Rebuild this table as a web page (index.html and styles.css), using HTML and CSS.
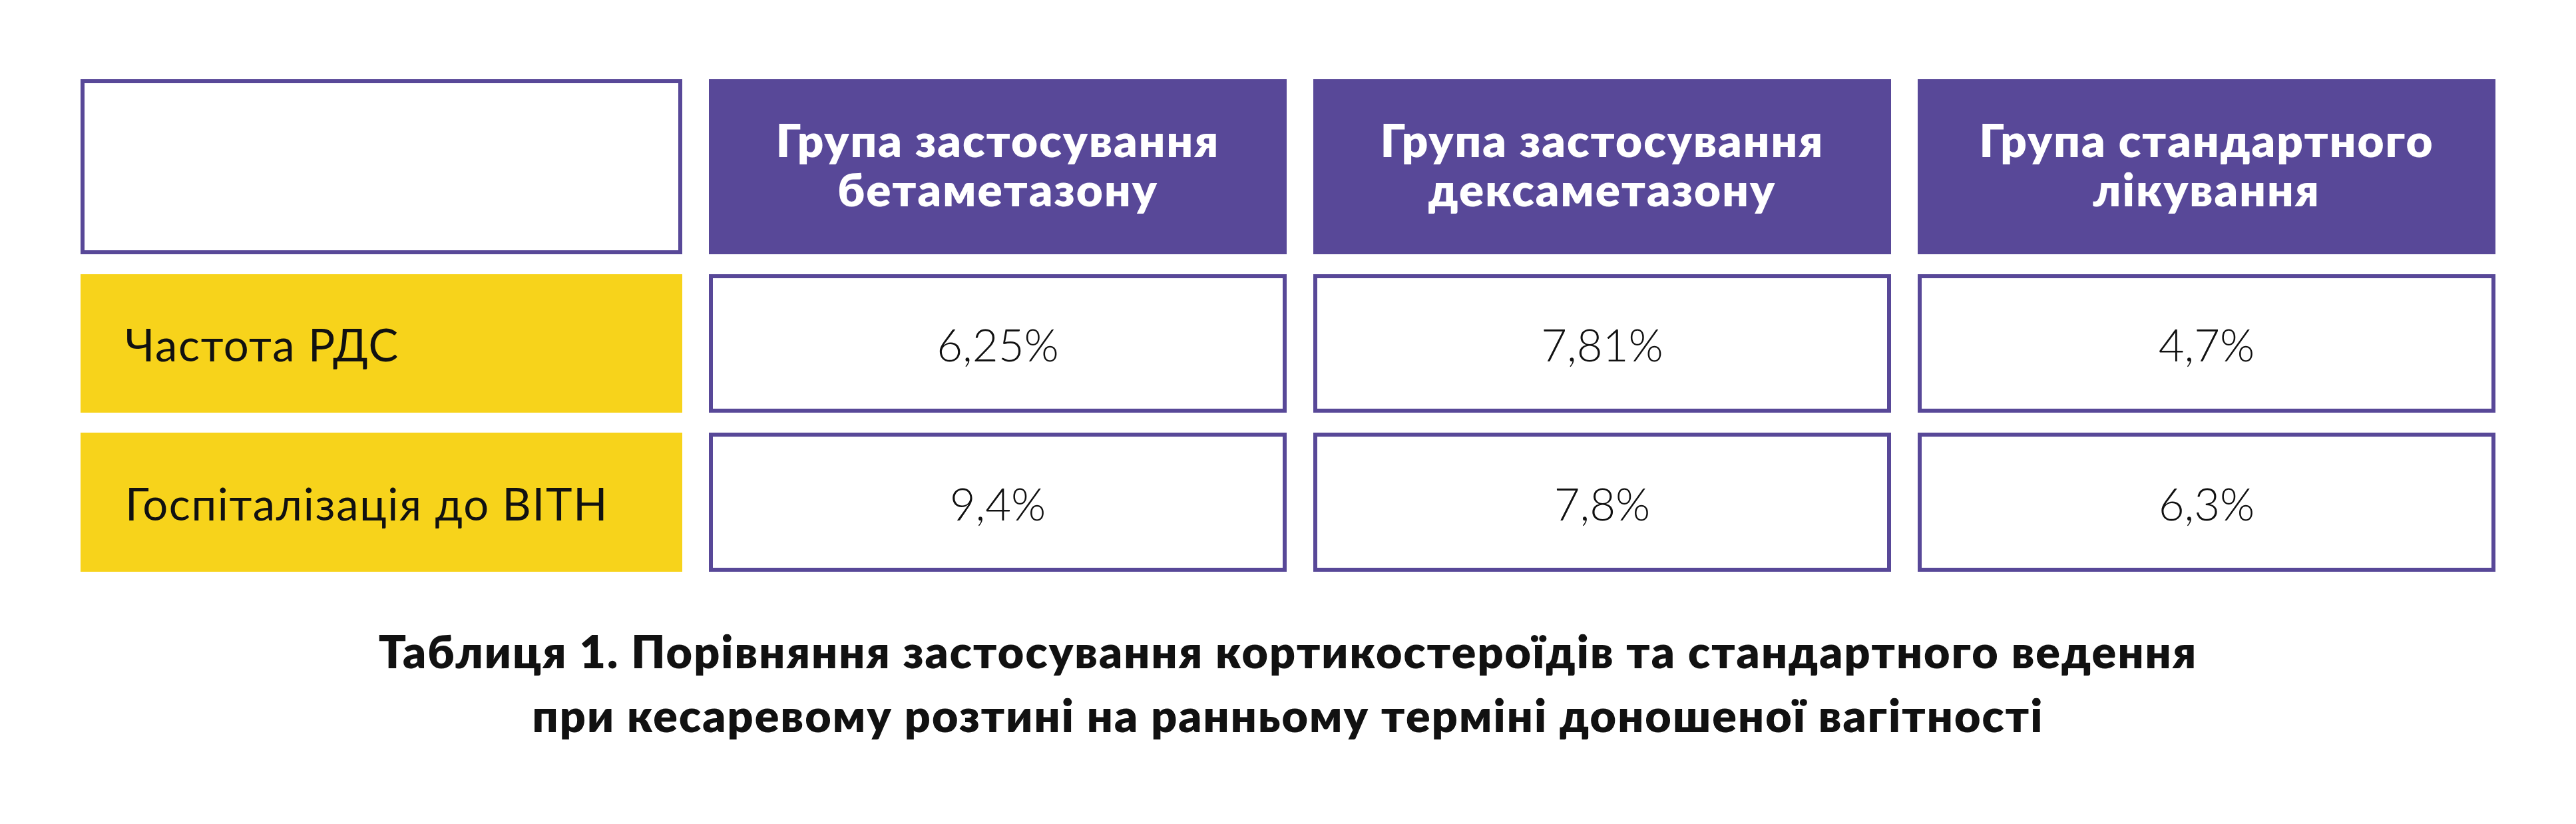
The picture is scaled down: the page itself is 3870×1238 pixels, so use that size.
FILE: index.html
```html
<!DOCTYPE html>
<html lang="uk">
<head>
<meta charset="utf-8">
<title>Таблиця 1</title>
<link rel="stylesheet" href="styles.css">
</head>
<body>
<main class="page">
  <div class="table">
    <div class="cell cell--blank"></div>
    <div class="cell cell--head"><span class="line">Група застосування</span><span class="line">бетаметазону</span></div>
    <div class="cell cell--head"><span class="line">Група застосування</span><span class="line">дексаметазону</span></div>
    <div class="cell cell--head"><span class="line">Група стандартного</span><span class="line">лікування</span></div>

    <div class="cell cell--label">Частота РДС</div>
    <div class="cell cell--value">6,25%</div>
    <div class="cell cell--value">7,81%</div>
    <div class="cell cell--value">4,7%</div>

    <div class="cell cell--label">Госпіталізація до ВІТН</div>
    <div class="cell cell--value">9,4%</div>
    <div class="cell cell--value">7,8%</div>
    <div class="cell cell--value">6,3%</div>
  </div>
  <p class="caption">Таблиця 1. Порівняння застосування кортикостероїдів та стандартного ведення<br>при кесаревому розтині на ранньому терміні доношеної вагітності</p>
</main>
</body>
</html>
```

FILE: styles.css
```css
html, body {
  margin: 0;
  padding: 0;
  background: #ffffff;
}

.page {
  padding: 119px 0 0 121px;
  font-family: "Lato", "Noto Sans", sans-serif;
  color: #111111;
}

.table {
  display: grid;
  grid-template-columns: 904px 868px 868px 868px;
  grid-template-rows: 263px 208px 209px;
  column-gap: 40px;
  row-gap: 30px;
  width: 3628px;
}

.cell {
  box-sizing: border-box;
  display: flex;
  align-items: center;
}

.cell--blank {
  border: 6px solid #584898;
  background: #ffffff;
}

.cell--head {
  background: #584898;
  color: #ffffff;
  flex-direction: column;
  justify-content: center;
  text-align: center;
  font-weight: 800;
  font-size: 69px;
  line-height: 74px;
  letter-spacing: 0.03em;
  padding-bottom: 8px;
}

.line {
  display: block;
  height: 74px;
}

.cell--label {
  background: #f7d31b;
  padding-left: 67px;
  font-size: 67px;
  font-weight: 400;
  letter-spacing: 0.025em;
  padding-top: 2px;
}

.cell--value {
  border: 6px solid #584898;
  background: #ffffff;
  justify-content: center;
  font-size: 67px;
  font-weight: 300;
  padding-top: 2px;
}

.caption {
  margin: 71px 0 0 0;
  width: 3628px;
  text-align: center;
  font-weight: 800;
  font-size: 68px;
  line-height: 96px;
  letter-spacing: 0.031em;
  color: #111111;
}
```
